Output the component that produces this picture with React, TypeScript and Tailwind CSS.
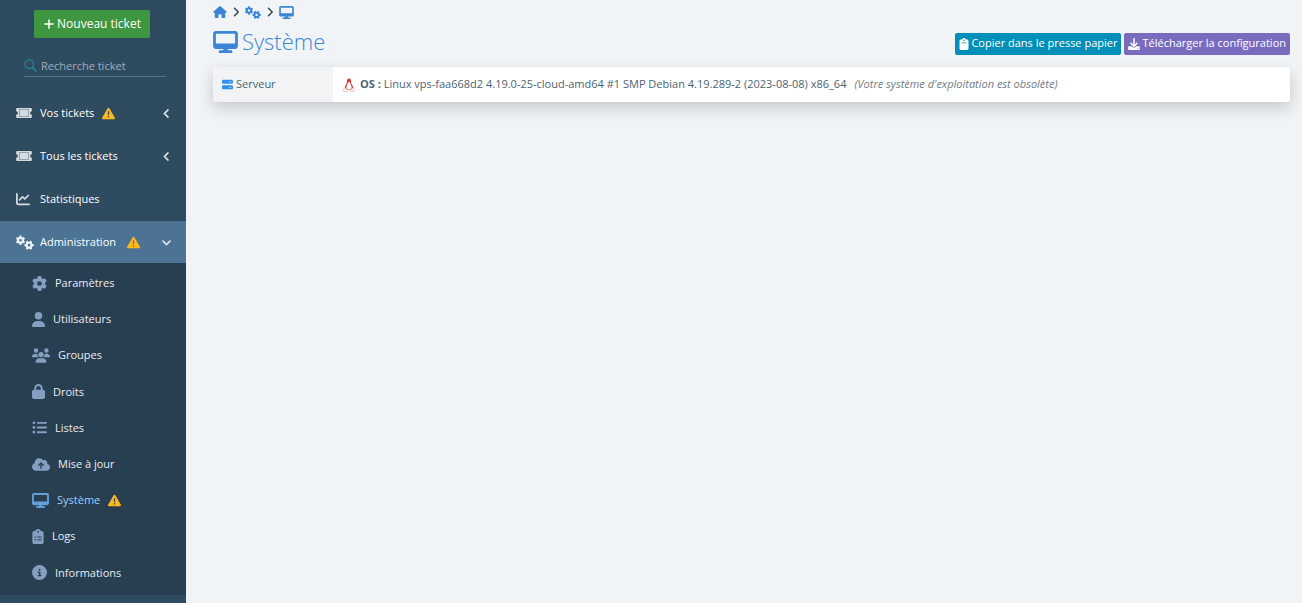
import type { ReactNode } from 'react';
import type { IconType } from 'react-icons';
import {
  FaAngleDown,
  FaAngleLeft,
  FaAngleRight,
  FaChartLine,
  FaCircleInfo,
  FaClipboard,
  FaClipboardList,
  FaCloudArrowUp,
  FaDesktop,
  FaDownload,
  FaGear,
  FaGears,
  FaHouse,
  FaListUl,
  FaLock,
  FaPlus,
  FaServer,
  FaTriangleExclamation,
  FaUser,
  FaUsers,
} from 'react-icons/fa6';

type SubItem = { label: string; icon: IconType; iconClass: string; active?: boolean };

const subItems: SubItem[] = [
  { label: 'Paramètres', icon: FaGear, iconClass: 'w-[15px]' },
  { label: 'Utilisateurs', icon: FaUser, iconClass: 'w-[13px]' },
  { label: 'Groupes', icon: FaUsers, iconClass: 'w-[18px]' },
  { label: 'Droits', icon: FaLock, iconClass: 'w-[13px]' },
  { label: 'Listes', icon: FaListUl, iconClass: 'w-[15px]' },
  { label: 'Mise à jour', icon: FaCloudArrowUp, iconClass: 'w-[18px]' },
  { label: 'Système', icon: FaDesktop, iconClass: 'w-[17px]', active: true },
  { label: 'Logs', icon: FaClipboardList, iconClass: 'w-[12px]' },
  { label: 'Informations', icon: FaCircleInfo, iconClass: 'w-[15px]' },
];

function SearchIcon() {
  return (
    <svg viewBox="0 0 13 13" className="size-[13px]" fill="none" stroke="currentColor" strokeLinecap="round">
      <circle cx="5.2" cy="5.2" r="4.3" strokeWidth="1.3" />
      <path d="M8.6 8.6L12 12" strokeWidth="1.7" />
    </svg>
  );
}

function TicketIcon({ className }: { className?: string }) {
  return (
    <svg viewBox="0 0 16 12" className={className} fill="currentColor">
      <path d="M1.2 1h13.6c.6 0 1 .4 1 1v2.300a1.700 1.700 0 0 0 0 3.400V10c0 .6-.4 1-1 1H1.200c-.6 0-1-.4-1-1V7.700a1.700 1.700 0 0 0 0-3.400V2c0-.6.4-1 1-1z" />
      <rect x="3.500" y="2.500" width="9" height="7" fill="none" stroke="#8493a1" strokeWidth="0.8" />
    </svg>
  );
}

function PenguinIcon({ className }: { className?: string }) {
  return (
    <svg viewBox="0 0 12 14" className={className}>
      <path
        d="M6 .5C4.700.5 4 1.500 4 3c0 1.700-.2 2.300-1.200 3.900C2 8.300 1.700 9.300 2 10.500l2.300 1.600h3.400l2.300-1.600c.3-1.200 0-2.200-.8-3.600C8.200 5.300 8 4.700 8 3 8 1.500 7.300.5 6 .5z"
        fill="#dc3534"
      />
      <path d="M6 4.300c-.8 0-1.200.4-1.400 1.200-.3 1.300-1.100 2.300-1.200 3.700-.1 1.300.8 2.600 2.600 2.600s2.700-1.300 2.600-2.600c-.1-1.400-.9-2.400-1.200-3.700C7.200 4.700 6.800 4.300 6 4.300z" fill="#fff" />
      <path
        d="M1.700 10.200L.6 11.300v1.500l3 .8 1-.9-1.800-2.700zM10.300 10.200l1.100 1.100v1.500l-3 .8-1-.9 1.800-2.700z"
        fill="#fff"
        stroke="#e58c8b"
        strokeWidth="0.6"
      />
    </svg>
  );
}

function NavItem({
  icon,
  label,
  warning,
  chevron,
  active,
}: {
  icon: ReactNode;
  label: string;
  warning?: ReactNode;
  chevron?: ReactNode;
  active?: boolean;
}) {
  return (
    <a
      href="#"
      className={`flex h-[42px] items-center pr-[14px] pl-4 text-[11px] text-white ${active ? 'bg-[#4c7294]' : ''}`}
    >
      <span className={`flex w-6 ${active ? 'text-[#edf1f5]' : 'text-[#d5dbe1]'}`}>{icon}</span>
      <span>{label}</span>
      {warning}
      <span className="ml-auto text-[#d5dbe1]">{chevron}</span>
    </a>
  );
}

function Sidebar() {
  return (
    <aside className="w-[186px] shrink-0 bg-[#2f4b60]">
      <div className="flex flex-col items-center pt-[10px] pr-[2px]">
        <button className="flex h-7 w-[116px] items-center justify-center gap-[2px] rounded-[2px] bg-[#3f9641] text-[12px] whitespace-nowrap text-white">
          <FaPlus className="size-3" />
          Nouveau ticket
        </button>
      </div>
      <form className="mx-5 mt-[17px] ml-6 flex h-[22px] items-center gap-1 border-b border-[#557086]">
        <label htmlFor="search" aria-label="Recherche ticket" className="text-[#24849c]">
          <SearchIcon />
        </label>
        <input
          id="search"
          type="text"
          placeholder="Recherche ticket"
          className="h-5 w-full min-w-0 bg-transparent text-[11px] leading-5 text-white outline-none placeholder:text-[#9fadb9]"
        />
      </form>
      <nav className="mt-[15px] flex flex-col gap-px">
        <NavItem
          icon={<TicketIcon className="h-3 w-4" />}
          label="Vos tickets"
          warning={<FaTriangleExclamation className="ml-2 size-[13px] text-[#ffb71c]" />}
          chevron={<FaAngleLeft className="size-[11px]" stroke="currentColor" strokeWidth={24} />}
        />
        <NavItem
          icon={<TicketIcon className="h-3 w-4" />}
          label="Tous les tickets"
          chevron={<FaAngleLeft className="size-[11px]" stroke="currentColor" strokeWidth={24} />}
        />
        <NavItem icon={<FaChartLine className="size-[14px]" />} label="Statistiques" />
        <div>
          <NavItem
            icon={<FaGears className="h-[15px] w-[18px]" />}
            label="Administration"
            active
            warning={<FaTriangleExclamation className="ml-[11px] size-[13px] text-[#ffb71c]" />}
            chevron={<FaAngleDown className="size-[11px]" stroke="currentColor" strokeWidth={32} />}
          />
          <div className="bg-[#283e51] pt-[2px] pb-1">
            <ul className="grid h-[326px] auto-rows-fr">
              {subItems.map(({ label, icon: Icon, iconClass, active }) => (
                <li key={label} className="flex">
                  <a
                    href="#"
                    className={`flex flex-1 items-center gap-2 pl-8 text-[11px] ${active ? 'text-[#99d1fb]' : 'text-[#e9edf1]'}`}
                  >
                    <Icon className={`h-[15px] ${iconClass} ${active ? 'text-[#64a0d8]' : 'text-[#859fc1]'}`} />
                    <span className={active ? 'font-medium' : ''}>{label}</span>
                    {active && <FaTriangleExclamation className="size-[13px] text-[#ffb71c]" />}
                  </a>
                </li>
              ))}
            </ul>
          </div>
        </div>
      </nav>
    </aside>
  );
}

export default function App() {
  return (
    <div className="flex min-h-screen bg-[#f0f4f7] font-['Open_Sans',sans-serif]">
      <Sidebar />
      <main className="min-w-0 flex-1 pr-3 pl-[27px]">
        <nav aria-label="Fil d'Ariane" className="flex h-6 items-center gap-[5px] text-[#3c84d6]">
          <a href="#" aria-label="Accueil">
            <FaHouse className="h-3 w-[14px]" />
          </a>
          <FaAngleRight className="h-3 w-2 text-[#394650]" />
          <a href="#" aria-label="Administration">
            <FaGears className="h-[13px] w-4" />
          </a>
          <FaAngleRight className="h-3 w-2 text-[#394650]" />
          <a href="#" aria-label="Système">
            <FaDesktop className="h-[13px] w-[15px]" />
          </a>
        </nav>
        <header className="flex h-[43px] items-center justify-between pb-2">
          <h1 className="flex items-center gap-1 text-[22px] font-light text-[#3c84d6]">
            <FaDesktop className="h-[22px] w-[25px]" />
            Système
          </h1>
          <div className="flex gap-[3px] pt-1 text-[11px] text-white">
            <button className="flex h-[22px] items-center gap-[2px] rounded-[2px] bg-[#008fb8] px-1">
              <FaClipboard className="h-3 w-[10px]" />
              Copier dans le presse papier
            </button>
            <button className="flex h-[22px] items-center gap-[2px] rounded-[2px] bg-[#796cbf] px-1">
              <FaDownload className="size-3" />
              Télécharger la configuration
            </button>
          </div>
        </header>
        <div className="rounded-[3px] bg-white shadow-[0_6px_16px_rgba(0,0,0,0.18)]">
          <table className="w-full text-left text-[11px] text-[#4a6375]">
            <tbody>
              <tr className="h-[35px]">
                <th scope="row" className="w-[120px] rounded-l-[3px] bg-[#f2f3f5] pl-[9px] font-normal">
                  <span className="flex items-center gap-[3px]">
                    <FaServer className="size-[11px] text-[#2f8fef]" />
                    Serveur
                  </span>
                </th>
                <td className="pl-[10px]">
                  <span className="flex items-center gap-[5px] whitespace-nowrap">
                    <PenguinIcon className="h-[14px] w-3" />
                    <span className="flex items-center gap-2">
                      <span>
                        <b>OS :</b> Linux vps-faa668d2 4.19.0-25-cloud-amd64 #1 SMP Debian 4.19.289-2 (2023-08-08) x86_64
                      </span>
                      <i className="text-[#6f7c86]">(Votre système d'exploitation est obsolète)</i>
                    </span>
                  </span>
                </td>
              </tr>
            </tbody>
          </table>
        </div>
      </main>
    </div>
  );
}
